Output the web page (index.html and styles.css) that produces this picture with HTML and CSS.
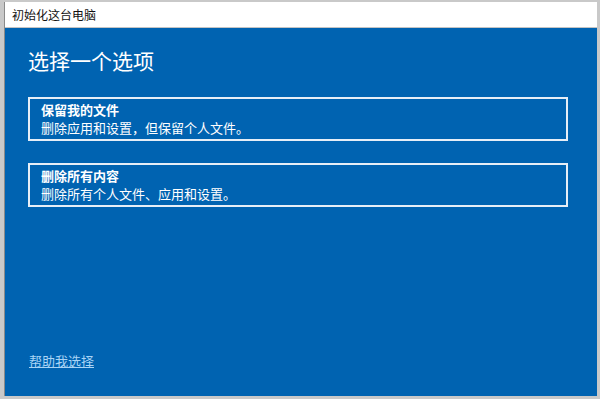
FILE: index.html
```html
<!DOCTYPE html>
<html lang="zh-CN">
<head>
  <meta charset="UTF-8">
  <title>初始化这台电脑</title>
  <link rel="stylesheet" href="styles.css">
</head>
<body>
  <div class="window">
    <div class="titlebar">初始化这台电脑</div>
    <div class="content">
      <h1 class="heading">选择一个选项</h1>
      <div class="option">
        <div class="option-title">保留我的文件</div>
        <div class="option-desc">删除应用和设置，但保留个人文件。</div>
      </div>
      <div class="option">
        <div class="option-title">删除所有内容</div>
        <div class="option-desc">删除所有个人文件、应用和设置。</div>
      </div>
      <a class="help-link" href="#">帮助我选择</a>
    </div>
  </div>
</body>
</html>
```

FILE: styles.css
```css
html, body {
  margin: 0;
  padding: 0;
  height: 100%;
}
body {
  background: #c9c9c9;
  font-family: "Noto Sans CJK SC", "Noto Sans", sans-serif;
  overflow: hidden;
}
.window {
  margin: 2px 3px 0 4px;
  height: 394px;
  display: flex;
  flex-direction: column;
  border-left: 1px solid #8a8a8a;
  box-sizing: border-box;
}
.titlebar {
  height: 25px;
  line-height: 26px;
  background: #fff;
  border-bottom: 1px solid #c4c4c4;
  font-size: 12px;
  color: #111;
  padding-left: 7px;
}
.content {
  flex: 1;
  background: #0063b1;
  color: #fff;
  padding: 20px 29px 26px 23px;
  display: flex;
  flex-direction: column;
}
.heading {
  margin: 0 0 25px 0;
  font-size: 21px;
  line-height: 24px;
  font-weight: normal;
}
.option {
  border: 2px solid #e6eef7;
  padding: 2px 11px;
  margin-bottom: 22px;
}
.option-title {
  font-size: 13px;
  line-height: 18px;
  font-weight: bold;
}
.option-desc {
  font-size: 13px;
  line-height: 18px;
}
.help-link {
  margin-top: auto;
  align-self: flex-start;
  color: #a9d4f5;
  font-size: 13px;
  line-height: 18px;
  margin-left: 1px;
}
```
